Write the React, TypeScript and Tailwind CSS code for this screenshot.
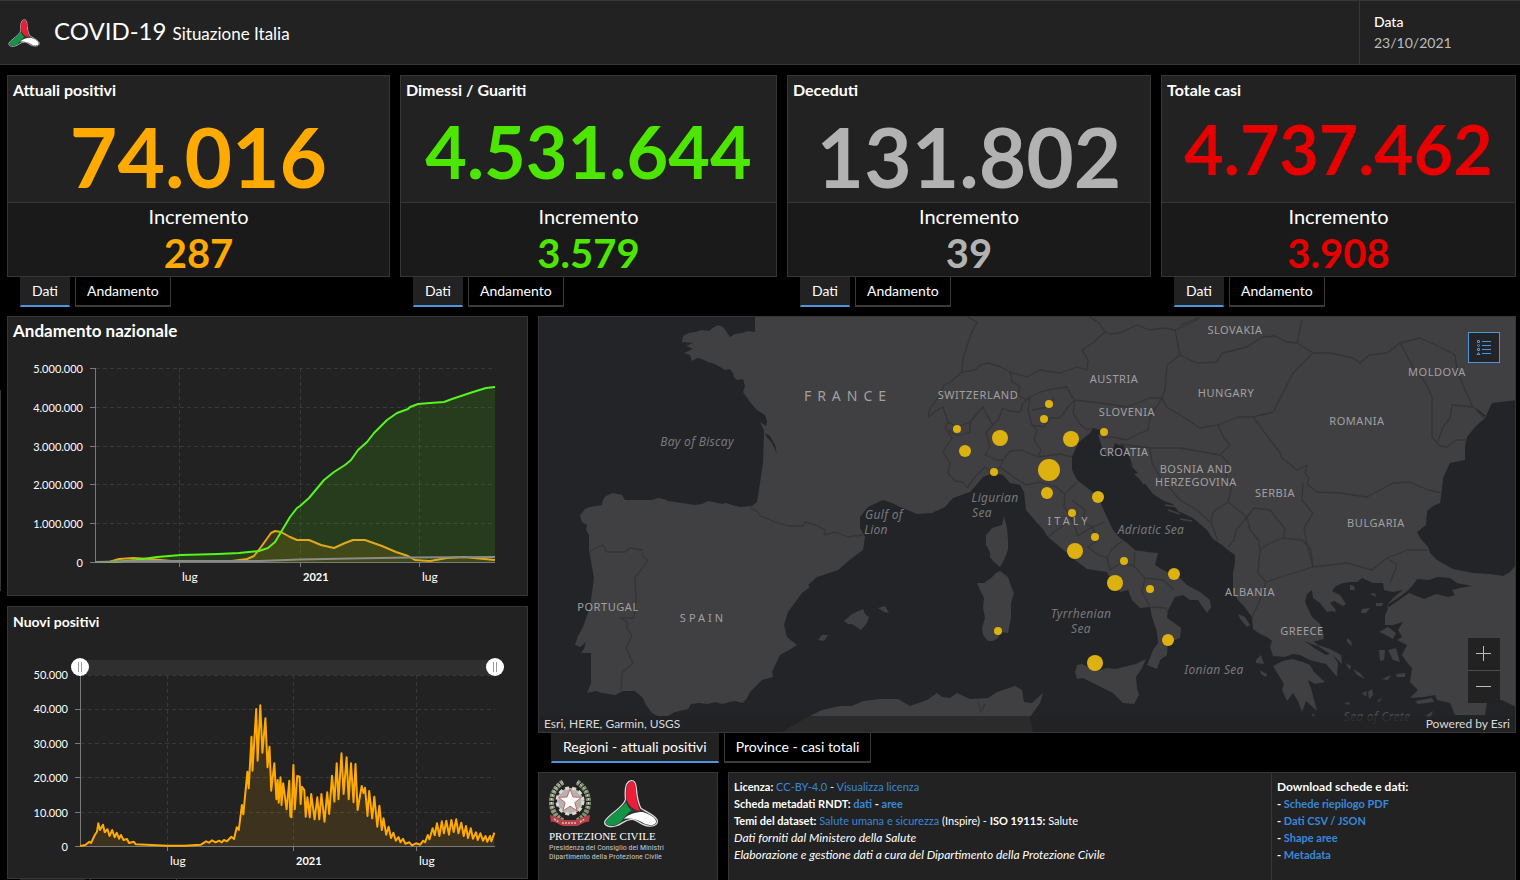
import React, { useState } from 'react';

interface Stat {
  title: string;
  value: string;
  increment: string;
  color: string;
  size: string;
}

interface Label {
  x: number;
  y: number;
  text: string;
  kind?: 'sea' | 'wide' | 'spaced' | 'faded';
}

const STATS: Stat[] = [
  { title: 'Attuali positivi', value: '74.016', increment: '287', color: 'text-[#ffaa00]', size: 'text-[82px]' },
  { title: 'Dimessi / Guariti', value: '4.531.644', increment: '3.579', color: 'text-[#4ce600]', size: 'text-[72px]' },
  { title: 'Deceduti', value: '131.802', increment: '39', color: 'text-[#b2b2b2]', size: 'text-[82px]' },
  { title: 'Totale casi', value: '4.737.462', increment: '3.908', color: 'text-[#e60000]', size: 'text-[68px]' },
];

const RECOVERED =
  '95,562 114,562 125,561 136,560 157,557 181,555 218,554 239,553 259,551 268,548 275,542 281,532 290,517 297,508 300,506 309,498 314,492 324,480 334,472 345,465 351,460 358,450 367,442 374,433 380,427 387,420 397,413 408,409 410,407 418,404 430,403 444,402 452,399 473,392 486,388 495,387';
const ACTIVE =
  '95,562 109,562 119,559 133,558 150,559 171,561 232,561 247,559 254,556 261,547 266,540 271,533 275,531 281,532 290,537 297,540 309,540 321,545 334,548 345,543 353,540 365,540 382,546 396,552 408,556 415,560 430,561 447,558 464,557 495,560';
const DEATHS = '95,562 140,561 260,561 300,559.5 350,558.5 410,557.5 495,557';

const DAILY =
  '80,846 85.3,845 89.4,841.7 91,843 94.8,835 97,831.7 98.3,823.3 100,830 103,824.7 104.7,832.3 107.5,829.3 109.5,836 112.2,830 114.6,837.3 116.7,832.7 119,838.7 121,835 123.5,840 127,839 129,843 133.7,841.7 135.8,844.3 146.7,844.7 167,845.7 184,845.7 201,844.7 206,841.3 209,842.7 212,840.3 215.6,842.3 219,840.7 221.8,842.3 224,840 227,841.3 231.3,836.7 234,839 236.8,827.3 238.8,830 241.9,805 243.3,814.3 247.4,771.7 248.7,788.3 251.5,736.7 252.5,770.7 256.2,709 257.6,760.7 260.3,705.3 262.4,752.7 265.4,718.3 267.5,767.3 269.5,746.7 271.2,790.7 274.3,763.3 276.4,799.3 277.7,780 278.7,802.7 280.5,777.3 281.5,805 283.2,783.3 286.6,809.3 289.3,780.7 290.3,816 291.4,817.3 293.4,765 294.8,809.3 297.2,776 299.6,776.7 300.6,804 302,786.7 304.3,790 305.7,816.7 307.4,797.3 309.8,817.3 311.2,794 314.6,819.3 317.3,797.3 319.3,819.3 321.4,794 324.5,821.7 327.2,792.3 329.2,814 332,775.7 334.4,801.7 336.7,763.3 338.5,799.3 341.5,753.3 343.6,794 346.6,757.3 348.7,799.3 351,763.3 353.5,802.3 355.5,764 357.6,810 361.7,786 363.5,793 365,787.7 367.5,816 369.2,791 372.2,818.3 374.3,796.7 377.3,826.7 379.4,805.7 381.8,830 383.5,818.3 386.2,834.7 388.6,826.7 391,838 393.4,832.7 395.8,840.7 398.5,837 400.5,842.3 403,838.7 405.3,843.7 409.4,842.3 412,845.3 416,843.3 420.3,844.7 423,840.7 425,842.3 427.8,835 429.5,839.3 432.6,828.3 434.7,835.3 437,823.3 439.4,836 441.8,821.3 443.9,833.3 446.3,820.7 449,834.7 451.4,820 453.7,832 456.2,819.3 458.5,833.3 461.3,822.7 463.7,836 466,826 468,838 470.8,828.3 472.9,838.7 476,832.3 477.7,840 480.4,833.3 483,840.7 485.5,836 487.2,841.7 490,836 491.3,841.3 494.4,832.7';

const LAND = [
  // continental Europe and Anatolia
  'M755,316 755,332 748,331 742,333 735,334 730,337 726,331 723,327 718,325 713,328 709,331 702,330 695,332 689,333 683,336 682,342 693,343 686,346 693,349 684,353 690,355 692,361 697,358 702,359 708,362 715,364 720,367 725,370 730,369 733,373 734,377 737,380 743,379 745,386 743,392 750,402 757,410 765,415 767,421 766,426 760,422 764,430 764,433 763,463 760,483 757,502 752,506 740,507 732,505 726,503 722,504 713,502 708,501 702,504 695,505 682,503 668,501 664,499 658,498 652,500 645,500 625,500 622,495 613,493 606,496 603,500 602,505 590,507 585,509 580,515 582,522 587,525 586,530 589,535 589,550 594,578 590,607 583,627 578,636 575,645 580,647 586,642 584,649 581,653 591,653 591,683 587,693 596,691 602,693 615,695 623,691 635,691 643,698 646,705 652,713 658,716 668,716 675,712 688,709 691,704 699,703 708,704 715,702 722,704 730,702 735,701 743,703 747,698 750,692 762,680 773,677 772,672 780,655 789,650 797,645 787,637 784,625 788,612 802,593 810,587 808,585 817,577 838,570 852,558 863,550 865,537 860,528 860,517 868,507 883,500 892,503 900,507 917,514 932,513 945,507 953,498 970,492 978,483 983,477 993,473 1003,475 1010,483 1020,485 1024,492 1026,510 1032,517 1037,523 1042,528 1048,537 1060,547 1067,553 1075,560 1087,569 1100,571 1107,572 1110,578 1116,584 1120,592 1128,590 1132,600 1140,608 1150,607 1152,617 1157,632 1158,643 1153,650 1147,665 1157,669 1160,660 1167,655 1168,643 1180,638 1181,628 1173,622 1167,618 1168,610 1175,597 1183,595 1190,600 1198,600 1202,606 1207,613 1211,607 1210,600 1200,592 1187,585 1180,578 1163,570 1155,565 1158,553 1147,552 1135,550 1127,543 1120,538 1113,530 1105,513 1098,497 1090,490 1077,480 1072,470 1072,457 1078,443 1090,433 1093,428 1101,430 1104,434 1098,435 1102,447 1107,457 1112,452 1115,443 1119,445 1124,455 1130,465 1138,473 1134,474 1146,485 1153,494 1164,501 1173,504 1178,511 1193,518 1207,530 1213,539 1222,545 1228,550 1235,555 1235,563 1233,573 1233,593 1238,600 1243,605 1252,617 1253,629 1260,634 1267,637 1272,641 1270,647 1273,656 1285,657 1293,654 1300,655 1310,660 1317,662 1326,664 1337,677 1338,663 1331,652 1323,648 1312,645 1305,642 1316,641 1324,639 1323,632 1320,624 1312,617 1305,602 1307,594 1312,590 1313,598 1320,603 1327,612 1336,610 1330,603 1334,601 1343,606 1346,604 1340,595 1332,591 1336,586 1343,583 1350,582 1357,582 1362,578 1373,583 1383,583 1384,590 1393,592 1403,590 1393,598 1387,605 1388,608 1385,616 1385,625 1393,625 1403,622 1398,630 1402,637 1397,640 1407,645 1402,655 1406,661 1412,668 1410,682 1418,690 1410,698 1424,697 1435,695 1437,700 1450,703 1455,715 1485,715 1487,702 1502,700 1516,707 1516,565 1510,572 1503,576 1490,574 1473,573 1453,569 1437,560 1430,553 1428,547 1421,539 1417,532 1426,525 1427,511 1433,506 1440,503 1442,490 1443,478 1450,463 1465,460 1465,446 1467,437 1475,427 1485,418 1492,403 1501,402 1516,400 1516,316Z',
  // Peloponnese
  'M1273,666 1283,661 1292,659 1303,662 1310,665 1314,672 1325,682 1315,684 1308,680 1312,692 1317,711 1306,701 1302,712 1298,701 1293,693 1287,701 1282,690 1284,684Z',
  // Corsica, Sardinia, Sicily
  'M1004,516 1007,528 1008,540 1008,550 1004,560 1000,567 994,562 990,557 990,552 986,545 986,535 992,528 1002,525Z',
  'M1000,571 1008,577 1011,586 1014,593 1011,603 1011,618 1008,633 1001,632 998,638 993,641 988,641 983,635 982,628 985,618 983,608 984,598 980,590 977,583 984,583 991,578 996,573Z',
  'M1075,672 1077,665 1082,664 1090,668 1097,671 1107,668 1116,669 1127,666 1136,664 1146,659 1142,668 1136,677 1137,688 1139,695 1134,704 1123,703 1113,693 1097,685 1083,678 1077,679Z',
  // Balearics
  'M844,621 852,614 863,609 865,614 869,617 867,623 861,630 852,624 848,624Z',
  'M878,608 885,606 889,613 884,612Z',
  'M818,640 822,635 828,635 824,641Z',
  // North Africa
  'M792,726 808,717 822,710 840,706 852,706 863,701 880,699 898,699 910,706 927,700 937,693 942,697 950,698 957,693 970,699 988,698 997,692 1015,686 1022,690 1024,702 1032,703 1043,693 1040,703 1030,717 1033,733 780,733Z',
  // Evia and the Aegean islands
  'M1304,640 1312,640 1318,645 1330,649 1341,655 1342,664 1334,656 1324,652 1315,646Z',
  'M1323,604 1331,607 1337,612 1330,611Z',
  'M1238,614 1245,617 1250,625 1247,627 1241,620Z',
  'M1256,660 1261,655 1264,664 1256,663Z',
  'M1260,670 1267,674 1266,677 1261,674Z',
  'M1350,585 1354,586 1355,590 1350,590Z',
  'M1370,594 1375,593 1376,597Z',
  'M1362,609 1370,608 1366,613 1361,613Z',
  'M1376,603 1383,603 1382,606 1376,606Z',
  'M1379,632 1388,627 1396,633 1393,639 1384,634Z',
  'M1347,638 1351,641 1352,646 1347,642Z',
  'M1379,650 1385,650 1384,660 1380,661Z',
  'M1388,650 1396,648 1400,662 1393,660Z',
  'M1345,663 1351,666 1350,670Z',
  'M1353,669 1360,673 1365,679 1357,675Z',
  'M1382,679 1391,675 1388,680Z',
  'M1396,674 1405,673 1405,677 1397,677Z',
  'M1362,693 1367,691 1366,697Z',
  'M1368,692 1372,689 1373,695 1369,699Z',
  'M1377,701 1383,697 1379,702Z',
  'M1344,703 1350,702 1349,705Z',
  'M1415,701 1432,698 1434,702 1418,704Z',
  'M1425,716 1433,711 1430,719Z',
  'M1313,713 1315,717 1312,716Z',
];

// water that cuts into the mainland: Marmara, Gironde, Dalmatian channels
const INLETS = [
  'M1387,605 1398,598 1406,592 1413,585 1417,579 1429,580 1437,577 1450,578 1457,583 1472,586 1460,588 1452,590 1455,595 1448,597 1436,594 1424,599 1409,593 1399,600 1389,607Z',
  'M765,433 770,436 775,445 777,454 772,443 766,436Z',
  'M1476,408 1486,416 1482,417Z',
  'M1118,446 1123,445 1130,458 1133,467 1125,460Z',
  'M1308,643 1318,646 1330,654 1326,655 1314,648Z',
];

const BORDERS = [
  'M590,551 603,545 607,552 625,552 630,548 642,550 643,557 648,560 641,570 635,577 636,600 634,618 620,618 627,622 627,628 632,636 626,648 633,663 622,673 621,690',
  'M750,507 758,512 760,516 775,522 788,526 803,526 805,522 816,525 825,530 824,535 835,532 848,537 863,535',
  'M967,317 977,322 972,332 968,343 963,358 962,372 950,382 944,385 938,398 930,408 928,417 936,411 943,407 948,422 945,428 952,438 943,452 950,463 948,473 955,481 963,482 967,488',
  'M962,372 975,370 980,365 987,363 999,366 1010,372 1012,381 1020,387 1018,395 1026,400 1030,397 1040,392 1047,390 1067,387 1070,394 1075,400 1100,403 1127,407 1150,398 1162,398 1167,407 1180,415 1200,428 1218,425 1238,417 1253,417 1273,412 1283,393 1293,373 1304,362 1313,353 1330,353 1353,358 1360,363 1369,355 1387,353 1400,343 1420,338 1440,347 1455,355 1457,370 1465,390 1473,407 1485,418',
  'M948,422 957,427 970,422 983,407 987,415 993,425 998,420 1003,408 1009,411 1020,412 1023,403 1030,397',
  'M1010,372 1027,377 1040,370 1060,373 1077,367 1087,370 1088,360 1082,350 1094,342 1105,332 1099,323 1090,317',
  'M1105,332 1110,334 1120,333 1137,325 1150,330 1163,328 1175,330 1186,325 1197,320 1200,317 M1175,330 1180,355 1167,365 1165,390 1162,398 M1180,355 1197,363 1217,362 1222,353 1235,350 1247,347 1262,337 1275,336 1287,342 1297,343 1313,353 M1297,343 1302,320 M965,316 950,316 M1180,325 1198,318',
  'M1075,400 1073,413 1080,424 1087,430 1093,428 M1103,438 1112,437 1127,440 1136,435 1148,430 1150,417 1162,398 M1120,444 1150,448 1180,448 1220,455 1230,445 1223,436 1218,425 M1150,448 1152,463 1160,477 1180,500 1197,510 1210,522',
  'M1253,417 1265,433 1280,453 1282,458 1297,470 1307,465 1305,473 1309,478 1307,484 1317,492 1340,493 1367,497 1380,490 1393,483 1410,482 1428,490 1442,493 M1303,483 1302,500 1313,513 1304,528 1306,540 1313,567',
  'M1400,343 1413,367 1425,382 1432,397 1432,437 1440,446 1447,447 1456,440 1467,440 M1438,441 1443,427 1450,418 1452,405 1463,406 1473,407',
  'M1220,455 1228,462 1226,477 1232,484 1228,502 1247,517 1254,508 1270,510 1285,529 1283,538 1302,540 1311,550 1313,567 1330,565 1347,563 1372,570 1387,558 1407,550 1428,550 M1228,502 1213,512 1211,522 1218,541 M1247,517 1236,530 1234,540 1228,547 M1247,517 1250,530 1259,541 1260,550 1258,573 1266,582 1290,574 1313,567 M1260,550 1270,543 1283,538 M1387,558 1397,565 1390,583 M1266,582 1259,603 1252,617',
  // Italian regions
  'M948,430 957,436 970,432 970,422 M993,425 986,433 990,447 985,455 997,460 1003,460 1000,467 993,473 985,467 975,477 967,488 M1003,460 1010,451 1022,450 1038,457 1060,454 1072,457 M1000,467 1015,478 1026,485',
  'M1030,397 1028,410 1032,425 1037,430 1034,440 1041,450 1038,457 M1032,410 1048,407 1054,398 M1032,425 1044,427 1050,418 1060,418 1068,407 1075,400',
  'M1026,485 1040,482 1056,487 1065,494 1077,482 M1065,494 1064,507 1070,515 1064,525 1054,532 1048,537 M1072,500 1085,510 1083,523 1093,527 1105,522 M1070,515 1078,536 1092,527 1098,540 1088,547 1098,555 1107,558 1112,549 1122,541 M1107,558 1110,570 1121,563 1134,566 1135,552 M1134,566 1145,578 1163,580 1174,590 M1145,578 1142,592 1150,607 1166,608 1168,613',
  'M978,702 981,712 985,704',
];

const REGIONS: [number, number, number][] = [
  [957, 429, 4], [965, 451, 6], [1000, 438, 8], [994, 472, 4], [1049, 404, 4], [1044, 419, 4], [1071, 439, 8],
  [1104, 432, 4], [1049, 470, 11], [1047, 493, 6], [1098, 497, 6], [1072, 513, 4], [1095, 537, 4], [1075, 551, 8],
  [1124, 561, 4], [1115, 583, 8], [1174, 574, 6], [1150, 589, 4], [1168, 640, 6], [1095, 663, 8], [998, 631, 4],
];

const LABELS: Label[] = [
  { x: 848, y: 401, text: 'FRANCE', kind: 'wide' },
  { x: 978, y: 399, text: 'SWITZERLAND' },
  { x: 1114, y: 383, text: 'AUSTRIA' },
  { x: 1235, y: 334, text: 'SLOVAKIA' },
  { x: 1226, y: 397, text: 'HUNGARY' },
  { x: 1437, y: 376, text: 'MOLDOVA' },
  { x: 1357, y: 425, text: 'ROMANIA' },
  { x: 1127, y: 416, text: 'SLOVENIA' },
  { x: 1124, y: 456, text: 'CROATIA' },
  { x: 1196, y: 473, text: 'BOSNIA AND' },
  { x: 1196, y: 486, text: 'HERZEGOVINA' },
  { x: 1275, y: 497, text: 'SERBIA' },
  { x: 1376, y: 527, text: 'BULGARIA' },
  { x: 1250, y: 596, text: 'ALBANIA' },
  { x: 1302, y: 635, text: 'GREECE' },
  { x: 1069, y: 525, text: 'ITALY', kind: 'spaced' },
  { x: 608, y: 611, text: 'PORTUGAL' },
  { x: 703, y: 622, text: 'SPAIN', kind: 'spaced' },
  { x: 697, y: 446, text: 'Bay of Biscay', kind: 'sea' },
  { x: 884, y: 519, text: 'Gulf of', kind: 'sea' },
  { x: 876, y: 534, text: 'Lion', kind: 'sea' },
  { x: 995, y: 502, text: 'Ligurian', kind: 'sea' },
  { x: 982, y: 517, text: 'Sea', kind: 'sea' },
  { x: 1151, y: 534, text: 'Adriatic Sea', kind: 'sea' },
  { x: 1081, y: 618, text: 'Tyrrhenian', kind: 'sea' },
  { x: 1081, y: 633, text: 'Sea', kind: 'sea' },
  { x: 1214, y: 674, text: 'Ionian Sea', kind: 'sea' },
  { x: 1377, y: 721, text: 'Sea of Crete', kind: 'faded' },
];

const labelClass = {
  country: 'fill-[#a0a0a0] text-[11px] tracking-wider',
  spaced: 'fill-[#a0a0a0] text-[11px] tracking-[3px]',
  wide: 'fill-[#a0a0a0] text-[14px] tracking-[6px]',
  sea: 'fill-[#77787a] text-[12px] italic tracking-wide',
  faded: 'fill-[#4c4d50] text-[12px] italic tracking-wide',
};

const BladeLogo: React.FC<{ className: string }> = ({ className }) => (
  <svg viewBox="200 35 172 152" className={className} aria-hidden="true">
    <path
      d="M287 40C269 42 266 68 269 98C262 124 222 140 205 166C201 182 222 186 241 180C258 175 268 160 290 160C306 160 317 180 342 181C362 183 372 172 366 160C355 145 330 135 317 126C305 106 304 80 302 60C300 45 296 39 287 40Z"
      fill="#333"
      stroke="#d9d9d9"
      strokeWidth="4"
    />
    <path d="M287 43C272 45 270 70 272 98C278 118 294 132 314 134C302 108 302 82 300 60C298 47 294 42 287 43Z" fill="#ee1c37" />
    <path d="M270 107C257 126 226 142 209 166C205 179 222 182 240 177C262 168 264 148 288 132C280 126 274 117 270 107Z" fill="#149447" />
    <path d="M264 158C278 144 300 137 322 137C342 143 362 154 364 166C364 180 344 180 327 173C306 160 290 155 264 158Z" fill="#fff" />
  </svg>
);

const Emblem: React.FC = () => (
  <svg viewBox="0 0 42 48" className="w-[42px] h-[48px]" aria-hidden="true">
    <path d="M14 3C4 9 0 21 4 31c2 5 5 8 10 11" fill="none" stroke="#8e9b7b" strokeWidth="5" strokeDasharray="3 1" />
    <path d="M28 3c10 6 14 18 10 28c-2 5-5 8-10 11" fill="none" stroke="#7f8f70" strokeWidth="5" strokeDasharray="3 1" />
    <path d="M14 3C4 9 0 21 4 31M28 3c10 6 14 18 10 28" fill="none" stroke="#d4d8cb" strokeWidth="1" strokeDasharray="2 2" />
    <circle cx="21" cy="22" r="13" fill="#b4b2ae" />
    <circle cx="21" cy="22" r="13" fill="none" stroke="#dcd9d5" strokeWidth="3" strokeDasharray="4 3" />
    <path d="M21 10l3 8 8.500 .3-6.700 5.300 2.400 8.300L21 27.200l-7.200 4.700 2.400-8.300-6.700-5.300 8.500-.3z" fill="#fff" stroke="#c9655f" strokeWidth="1" />
    <path d="M1 36c6 1 9 4 14 5h12c5-1 8-4 14-5l-1 7c-4-1-8 3-12 4H14c-4-1-8-5-12-4z" fill="#b5404a" />
    <path d="M5 40l5 3m3 1h15m3-1l5-3" stroke="#e3b9b9" strokeWidth="1.500" strokeDasharray="2 1" fill="none" />
  </svg>
);

const Tabs: React.FC<{ items: string[]; label: string }> = ({ items, label }) => {
  const [active, setActive] = useState(0);

  return (
    <div role="tablist" aria-label={label} className="flex gap-[5px] pl-[13px] h-[30px]">
      {items.map((item, i) => (
        <button
          key={item}
          type="button"
          role="tab"
          aria-selected={i === active}
          onClick={() => setActive(i)}
          className={`px-[11px] h-[30px] text-[14px] leading-[28px] border-x border-b-2 text-white whitespace-nowrap ${
            i === active ? 'bg-[#222] border-x-[#222] border-b-[#4c97dc]' : 'bg-black border-[#3a3a3a]'
          }`}
        >
          {item}
        </button>
      ))}
    </div>
  );
};

const StatCard: React.FC<{ stat: Stat }> = ({ stat }) => (
  <div>
    <section className="border border-[#363636] bg-[#222]">
      <div className="h-[127px] border-b border-[#363636] text-center">
        <h2 className="px-[5px] pt-[4px] text-[16px] leading-5 font-bold text-left">{stat.title}</h2>
        <p className={`pt-[15px] font-bold leading-none ${stat.size} ${stat.color}`}>{stat.value}</p>
      </div>
      <div className="h-[73px] bg-[#1a1a1a] text-center">
        <p className="text-[20px] leading-[26px]">Incremento</p>
        <p className={`text-[40px] leading-[48px] font-bold ${stat.color}`}>{stat.increment}</p>
      </div>
    </section>
    <Tabs items={['Dati', 'Andamento']} label={stat.title} />
  </div>
);

const TrendChart: React.FC = () => (
  <svg viewBox="8 345 519 250" className="block w-full text-[11px] fill-white" role="img" aria-label="Andamento nazionale">
    <g stroke="#383838" strokeDasharray="4 3">
      {[368.5, 407.5, 446.5, 484.5, 523.5].map((y) => (
        <path key={y} d={`M96 ${y}H495`} />
      ))}
      {[179.5, 300.5, 419.5].map((x) => (
        <path key={x} d={`M${x} 368V562`} />
      ))}
    </g>
    <polygon points={`${RECOVERED} 495,562`} fill="#4ce600" fillOpacity="0.13" />
    <polygon points={`${ACTIVE} 495,562`} fill="#ffaa00" fillOpacity="0.13" />
    <path
      d="M95.500 368V562.500H495M90 368.500h5M90 407.500h5M90 446.500h5M90 484.500h5M90 523.500h5M90 562.500h5M179.500 562v5M300.500 562v5M419.500 562v5"
      fill="none"
      stroke="#7a7a7a"
    />
    <g fill="none" strokeWidth="2" strokeLinejoin="round">
      <polyline points={ACTIVE} stroke="#e2a81c" />
      <polyline points={RECOVERED} stroke="#55f51d" />
      <polyline points={DEATHS} stroke="#8c8c86" />
    </g>
    <g textAnchor="end">
      <text x="83" y="373">5.000.000</text>
      <text x="83" y="412">4.000.000</text>
      <text x="83" y="451">3.000.000</text>
      <text x="83" y="489">2.000.000</text>
      <text x="83" y="528">1.000.000</text>
      <text x="83" y="567">0</text>
    </g>
    <text x="182" y="581" className="text-[12px]">lug</text>
    <text x="303" y="581" className="font-bold">2021</text>
    <text x="422" y="581" className="text-[12px]">lug</text>
  </svg>
);

const rangeClass =
  'absolute -inset-x-[9px] -top-px h-[15px] appearance-none bg-transparent pointer-events-none [&::-webkit-slider-thumb]:pointer-events-auto [&::-webkit-slider-thumb]:appearance-none [&::-webkit-slider-thumb]:w-[18px] [&::-webkit-slider-thumb]:h-[18px] [&::-webkit-slider-thumb]:rounded-full [&::-webkit-slider-thumb]:bg-white [&::-webkit-slider-thumb]:bg-[linear-gradient(90deg,#999_1px,transparent_1px_3px,#999_3px)] [&::-webkit-slider-thumb]:bg-[length:4px_10px] [&::-webkit-slider-thumb]:bg-center [&::-webkit-slider-thumb]:bg-no-repeat';

const DailyChart: React.FC = () => {
  const [from, setFrom] = useState(0);
  const [to, setTo] = useState(100);

  return (
    <div className="pt-[25px]">
      <div className="relative h-[15px] ml-[72px] mr-[32px] bg-[#2f2f2f]">
        <input type="range" aria-label="Inizio periodo" value={from} onChange={(e) => setFrom(+e.target.value)} className={rangeClass} />
        <input type="range" aria-label="Fine periodo" value={to} onChange={(e) => setTo(+e.target.value)} className={rangeClass} />
      </div>
      <svg viewBox="8 675 519 203" className="block w-full overflow-visible text-[11px] fill-white" role="img" aria-label="Nuovi positivi">
        <g stroke="#383838" strokeDasharray="4 3">
          {[675.5, 709.5, 743.5, 777.5, 812.5].map((y) => (
            <path key={y} d={`M81 ${y}H495`} />
          ))}
          {[167.5, 293.5, 416.5].map((x) => (
            <path key={x} d={`M${x} 675V846`} />
          ))}
        </g>
        <polygon points={`${DAILY} 494.4,846 80,846`} fill="#ffaa00" fillOpacity="0.12" />
        <path
          d="M80.500 675V846.500H495M75 709.500h5M75 743.500h5M75 777.500h5M75 812.500h5M75 846.500h5M167.500 846v5M293.500 846v5M416.500 846v5"
          fill="none"
          stroke="#7a7a7a"
        />
        <polyline points={DAILY} fill="none" stroke="#ffaa00" strokeWidth="2" strokeLinejoin="round" />
        <g textAnchor="end">
          <text x="68" y="679">50.000</text>
          <text x="68" y="713">40.000</text>
          <text x="68" y="748">30.000</text>
          <text x="68" y="782">20.000</text>
          <text x="68" y="817">10.000</text>
          <text x="68" y="851">0</text>
        </g>
        <text x="170" y="865" className="text-[12px]">lug</text>
        <text x="296" y="865" className="font-bold">2021</text>
        <text x="419" y="865" className="text-[12px]">lug</text>
      </svg>
    </div>
  );
};

const RegionMap: React.FC = () => (
  <div className="relative border border-[#363636] bg-[#232428]">
    <svg viewBox="539 317 976 415" className="block w-full" role="img" aria-label="Regioni - attuali positivi">
      <g fill="#404042">
        {LAND.map((d) => (
          <path key={d} d={d} />
        ))}
      </g>
      <g fill="#232428">
        {INLETS.map((d) => (
          <path key={d} d={d} />
        ))}
      </g>
      <g fill="none" stroke="#343436" strokeWidth="1.300" strokeLinejoin="round">
        {BORDERS.map((d) => (
          <path key={d} d={d} />
        ))}
      </g>
      <path d="M1132 462l6 8M1137 474l7 10M1165 505l14 2M1168 510l12 4M1180 519l12 2" stroke="#404042" strokeWidth="1.500" />
      <g textAnchor="middle" className="font-['Noto_Sans',sans-serif]">
        {LABELS.map((l) => (
          <text key={`${l.text}${l.x}`} x={l.x} y={l.y} className={labelClass[l.kind ?? 'country']}>
            {l.text}
          </text>
        ))}
      </g>
      <g fill="#ddb10f">
        {REGIONS.map(([x, y, r]) => (
          <circle key={`${x}-${y}`} cx={x} cy={y} r={r} />
        ))}
      </g>
    </svg>
    <button
      type="button"
      aria-label="Legenda"
      className="absolute top-[15px] right-[15px] w-8 h-[31px] flex items-center justify-center border border-[#4c97dc] bg-[#232428]"
    >
      <svg viewBox="0 0 16 16" className="w-4 h-4" fill="none" stroke="#4c97dc" aria-hidden="true">
        <path d="M6 1.500h9M6 5.500h9M6 9.500h9M6 13.500h9" />
        <path d="M1.500 .5h2v2h-2zM1.500 8.500h2v2h-2zM1 14.500l1.500-2L4 14.500z" />
        <circle cx="2.500" cy="5.500" r="1" />
      </svg>
    </button>
    <div className="absolute right-[15px] bottom-[29px] flex flex-col gap-px bg-[#4a4a4a]">
      <button type="button" aria-label="Ingrandisci" className="w-8 h-8 flex items-center justify-center bg-[#222]">
        <svg viewBox="0 0 16 16" className="w-4 h-4" stroke="#bdbdbd" aria-hidden="true">
          <path d="M7.500 0v15M0 7.500h15" />
        </svg>
      </button>
      <button type="button" aria-label="Riduci" className="w-8 h-8 flex items-center justify-center bg-[#222]">
        <svg viewBox="0 0 16 16" className="w-4 h-4" stroke="#bdbdbd" aria-hidden="true">
          <path d="M0 7.500h15" />
        </svg>
      </button>
    </div>
    <div className="absolute inset-x-0 bottom-0 h-4 px-[5px] flex items-center justify-between bg-[#222]/70 text-[12px] leading-4 text-[#dadada]">
      <span>Esri, HERE, Garmin, USGS</span>
      <span>Powered by Esri</span>
    </div>
  </div>
);

const Anchor: React.FC<{ children: string }> = ({ children }) => (
  <a href="#" className="text-[#3a87d9]">
    {children}
  </a>
);

const App: React.FC = () => {
  return (
    <div className="relative h-screen flex flex-col overflow-hidden bg-black text-white font-[Lato,sans-serif]">
      <header className="flex h-[65px] shrink-0 border-y border-[#363636] bg-[#222]">
        <div className="flex flex-1 items-center pl-2">
          <BladeLogo className="w-8 h-[30px]" />
          <h1 className="pl-[14px] text-[24px] leading-8">
            COVID-19 <span className="text-[17px]">Situazione Italia</span>
          </h1>
        </div>
        <div className="w-[161px] pl-[14px] pt-[10px] border-l border-[#363636] text-[14px] leading-[21px]">
          <p className="font-medium">Data</p>
          <p className="text-[#bdbdbd]">23/10/2021</p>
        </div>
      </header>

      <main className="pt-[10px] pl-[7px] pr-[4px]">
        <div className="grid grid-cols-[383fr_377fr_364fr_355fr] gap-[10px]">
          {STATS.map((stat) => (
            <StatCard key={stat.title} stat={stat} />
          ))}
        </div>

        <div className="grid grid-cols-[521fr_978fr] gap-[10px] pt-[9px]">
          <div className="flex flex-col">
            <section className="border border-[#363636] bg-[#222]">
              <h2 className="h-7 px-[5px] text-[17px] leading-7 font-bold">Andamento nazionale</h2>
              <TrendChart />
            </section>
            <section className="mt-[10px] border border-[#363636] bg-[#222]">
              <h2 className="h-7 px-[5px] text-[14px] leading-[30px] font-bold">Nuovi positivi</h2>
              <DailyChart />
            </section>
            <div className="flex gap-[5px] pl-[13px] h-[30px]" aria-hidden="true">
              <div className="w-[65px] bg-[#222]" />
              <div className="w-[87px] border-x border-[#3a3a3a]" />
            </div>
          </div>

          <div className="flex flex-col">
            <RegionMap />
            <Tabs items={['Regioni - attuali positivi', 'Province - casi totali']} label="Mappa" />
            <div className="flex flex-1 gap-[10px] mt-[9px]">
              <section className="w-[180px] px-[10px] pt-[6px] border border-[#363636] bg-[#222]">
                <div className="flex gap-3">
                  <Emblem />
                  <BladeLogo className="w-[56px] h-[49px]" />
                </div>
                <p className="pt-px font-['Liberation_Serif',serif] text-[11px] leading-[14px] whitespace-nowrap">PROTEZIONE CIVILE</p>
                <p className="font-['Liberation_Sans_Narrow','Roboto_Condensed',sans-serif] text-[8px] leading-[9px] text-[#c4c4c4] whitespace-nowrap">
                  Presidenza del Consiglio dei Ministri
                  <br />
                  Dipartimento della Protezione Civile
                </p>
              </section>
              <div className="flex flex-1 border border-[#363636] bg-[#222] text-[11px] leading-[17px]">
                <div className="flex-1 pl-[5px] pt-[5px]">
                  <p>
                    <b>Licenza:</b> <Anchor>CC-BY-4.0</Anchor> - <Anchor>Visualizza licenza</Anchor>
                  </p>
                  <p className="font-bold">
                    Scheda metadati RNDT: <Anchor>dati</Anchor> - <Anchor>aree</Anchor>
                  </p>
                  <p>
                    <b>Temi del dataset:</b> <Anchor>Salute umana e sicurezza</Anchor> (Inspire) - <b>ISO 19115:</b> Salute
                  </p>
                  <p className="text-[12px] leading-[17px] italic">Dati forniti dal Ministero della Salute</p>
                  <p className="text-[12px] leading-[17px] italic">Elaborazione e gestione dati a cura del Dipartimento della Protezione Civile</p>
                </div>
                <div className="w-[244px] pl-[5px] pt-[5px] border-l border-[#363636] font-bold">
                  <p className="text-[12px] leading-[17px]">Download schede e dati:</p>
                  <ul>
                    {['Schede riepilogo PDF', 'Dati CSV / JSON', 'Shape aree', 'Metadata'].map((item) => (
                      <li key={item}>
                        - <Anchor>{item}</Anchor>
                      </li>
                    ))}
                  </ul>
                </div>
              </div>
            </div>
          </div>
        </div>
      </main>
      <div className="absolute left-0 top-[390px] h-[201px] border-l border-[#363636]" aria-hidden="true" />
    </div>
  );
};

export default App;
